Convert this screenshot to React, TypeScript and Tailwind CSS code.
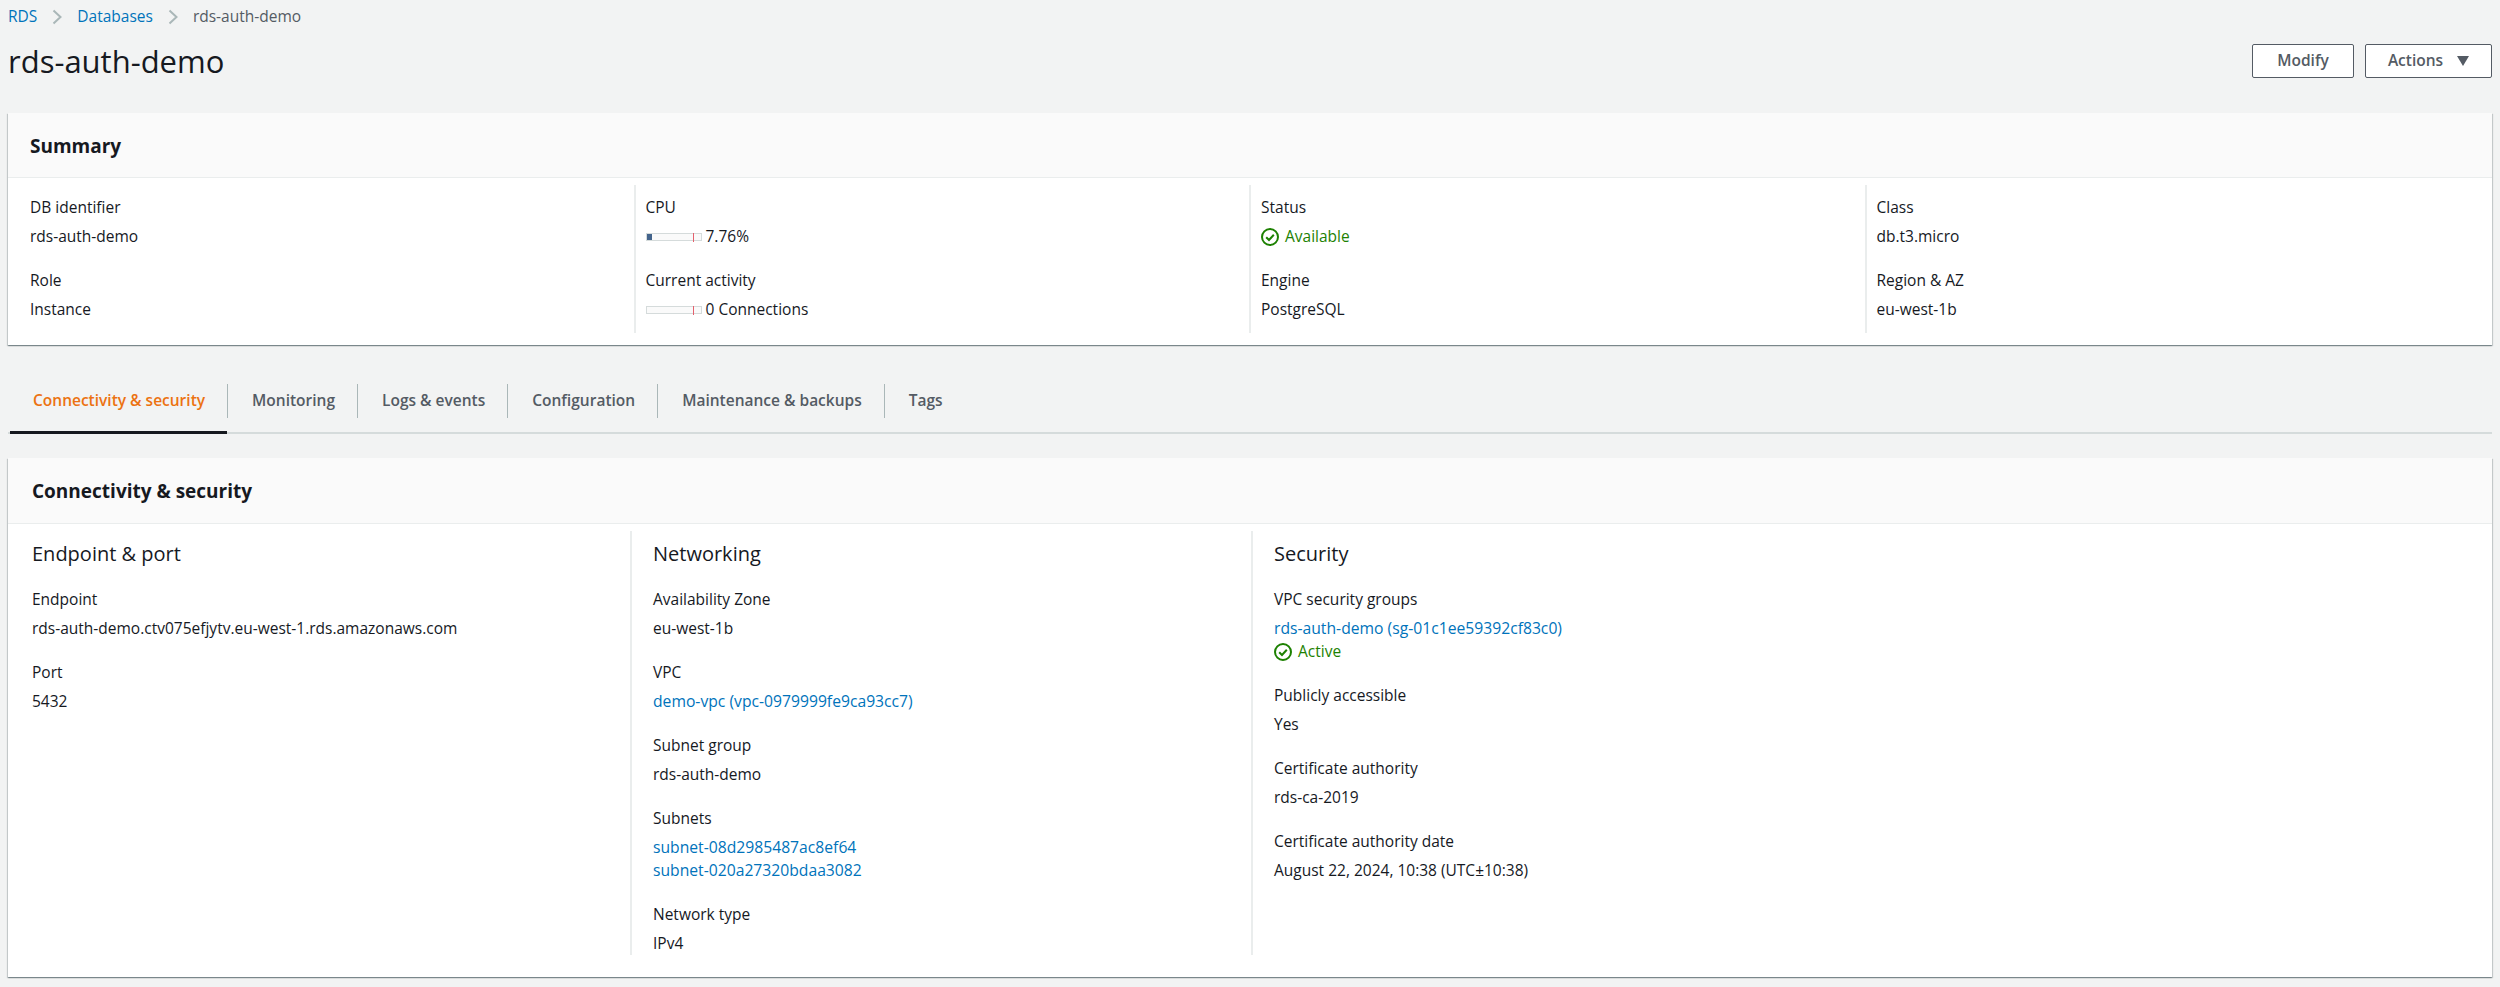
import React from "react";

const font = "font-['Open_Sans','Noto_Sans',sans-serif]";

function Ok({ text }: { text: string }) {
  return (
    <div className="flex items-center gap-[6px] text-[#1d8102] text-[15.5px] leading-[23px]">
      <svg width="18" height="18" viewBox="0 0 18 18" fill="none" stroke="#1d8102" strokeWidth="2">
        <circle cx="9" cy="9" r="8" />
        <path d="M5.2 9.2l2.8 2.8 4.8-5.2" />
      </svg>
      {text}
    </div>
  );
}

function Meter({ fill, text }: { fill: boolean; text: string }) {
  return (
    <div className="flex items-center gap-[4px] text-[15.5px] leading-[23px] text-[#16191f]">
      <div className="relative w-[56px] h-[8px] bg-[#fafafa] border border-[#d5dbdb]">
        {fill && <div className="absolute left-0 top-0 w-[5px] h-[6px] bg-[#44648c]" />}
        <div className="absolute left-[46px] top-[-1px] w-px h-[9px] bg-[#e4606d]" />
      </div>
      {text}
    </div>
  );
}

function Field({ label, children, className = "" }: { label: string; children: React.ReactNode; className?: string }) {
  return (
    <div className={className}>
      <div className="text-[15.5px] leading-[23px] text-[#16191f]">{label}</div>
      <div className="mt-[6px] text-[15.5px] leading-[23px] text-[#16191f]">{children}</div>
    </div>
  );
}

const Link = ({ children }: { children: React.ReactNode }) => (
  <div className="text-[#0073bb] text-[15.7px]">{children}</div>
);

const Chevron = () => (
  <svg className="mx-[15px]" width="10" height="16" viewBox="0 0 10 16" fill="none" stroke="#aab7b8" strokeWidth="2">
    <path d="M1.5 1.5L8.5 8l-7 6.5" />
  </svg>
);

const summary = [
  [
    ["DB identifier", "rds-auth-demo"],
    ["Role", "Instance"],
  ],
  [
    ["CPU", <Meter fill text="7.76%" />],
    ["Current activity", <Meter fill={false} text="0 Connections" />],
  ],
  [
    ["Status", <Ok text="Available" />],
    ["Engine", "PostgreSQL"],
  ],
  [
    ["Class", "db.t3.micro"],
    ["Region & AZ", "eu-west-1b"],
  ],
] as [string, React.ReactNode][][];

const tabs = ["Monitoring", "Logs & events", "Configuration", "Maintenance & backups", "Tags"];

export default function App() {
  return (
    <div className={`${font} bg-[#f2f3f3] h-[987px] overflow-hidden`}>
      {/* Breadcrumb */}
      <div className="flex items-center h-[32px] pl-[8px] pt-[2px] text-[15.5px] text-[#545b64]">
        <span className="text-[#0073bb]">RDS</span>
        <Chevron />
        <span className="text-[#0073bb]">Databases</span>
        <Chevron />
        <span>rds-auth-demo</span>
      </div>

      {/* Title */}
      <div className="flex items-center justify-between h-[57px] px-[8px] mb-[24px]">
        <h1 className="text-[31px] leading-[40px] text-[#16191f]">rds-auth-demo</h1>
        <div className="flex gap-[11px]">
          <button className="w-[102px] h-[34px] bg-white border-[1.5px] border-[#545b64] rounded-[2px] text-[15.5px] font-semibold text-[#545b64]">
            Modify
          </button>
          <button className="w-[127px] h-[34px] bg-white border-[1.5px] border-[#545b64] rounded-[2px] text-[15.5px] font-semibold text-[#545b64] flex items-center justify-center gap-[14px]">
            Actions
            <svg width="12" height="10" viewBox="0 0 12 10" fill="#545b64"><path d="M0 0h12L6 10z" /></svg>
          </button>
        </div>
      </div>

      {/* Summary */}
      <section className="mx-[8px] bg-white shadow-[0_1px_1px_0_rgba(0,28,36,0.3),1px_1px_1px_0_rgba(0,28,36,0.15),-1px_1px_1px_0_rgba(0,28,36,0.15)]">
        <div className="h-[65px] flex items-center px-[22px] pt-[2px] bg-[#fafafa] border-b border-[#eaeded] text-[19px] font-bold text-[#16191f]">
          Summary
        </div>
        <div className="grid grid-cols-4 pl-[22px] pt-[7px] pb-[12px]">
          {summary.map((col, i) => (
            <div key={i} className={`pt-[11px] pb-[12px] ${i > 0 ? "ml-[-12px] pl-[10px] border-l-2 border-[#eaeded]" : ""}`}>
              {col.map(([label, value], j) => (
                <Field key={j} label={label} className={j > 0 ? "mt-[21px]" : ""}>{value}</Field>
              ))}
            </div>
          ))}
        </div>
      </section>

      {/* Tabs */}
      <div className="mx-[8px] mt-[39px] h-[50px] flex items-start border-b-2 border-[#d5dbdb] text-[15.5px] font-semibold text-[#545b64]">
        <div className="ml-[2px] h-[50px] pl-[23px] pr-[22px] border-b-[3px] border-[#16191f] text-[#ec7211]">
          <div className="h-[34px] flex items-center">Connectivity &amp; security</div>
        </div>
        {tabs.map((t) => (
          <div key={t} className="h-[34px] pl-[24px] pr-[22px] flex items-center border-l border-[#aab7b8]">{t}</div>
        ))}
      </div>

      {/* Connectivity */}
      <section className="mx-[8px] mt-[24px] h-[519px] bg-white shadow-[0_1px_1px_0_rgba(0,28,36,0.3),1px_1px_1px_0_rgba(0,28,36,0.15),-1px_1px_1px_0_rgba(0,28,36,0.15)]">
        <div className="h-[66px] flex items-center px-[24px] pt-[2px] bg-[#fafafa] border-b border-[#eaeded] text-[19px] font-bold text-[#16191f]">
          Connectivity &amp; security
        </div>
        <div className="grid grid-cols-[622px_621px_1fr] pt-[7px]">
          <div className="pl-[24px] pt-[11px] h-[423px]">
            <h3 className="text-[20px] leading-[24px] text-[#16191f] mb-[22px]">Endpoint &amp; port</h3>
            <Field label="Endpoint">rds-auth-demo.ctv075efjytv.eu-west-1.rds.amazonaws.com</Field>
            <Field label="Port" className="mt-[21px]">5432</Field>
          </div>
          <div className="pl-[21px] pt-[11px] border-l-2 border-[#eaeded]">
            <h3 className="text-[20px] leading-[24px] text-[#16191f] mb-[22px]">Networking</h3>
            <Field label="Availability Zone">eu-west-1b</Field>
            <Field label="VPC" className="mt-[21px]"><Link>demo-vpc (vpc-0979999fe9ca93cc7)</Link></Field>
            <Field label="Subnet group" className="mt-[21px]">rds-auth-demo</Field>
            <Field label="Subnets" className="mt-[21px]">
              <Link>subnet-08d2985487ac8ef64</Link>
              <Link>subnet-020a27320bdaa3082</Link>
            </Field>
            <Field label="Network type" className="mt-[21px]">IPv4</Field>
          </div>
          <div className="pl-[21px] pt-[11px] border-l-2 border-[#eaeded]">
            <h3 className="text-[20px] leading-[24px] text-[#16191f] mb-[22px]">Security</h3>
            <Field label="VPC security groups">
              <Link>rds-auth-demo (sg-01c1ee59392cf83c0)</Link>
              <Ok text="Active" />
            </Field>
            <Field label="Publicly accessible" className="mt-[21px]">Yes</Field>
            <Field label="Certificate authority" className="mt-[21px]">rds-ca-2019</Field>
            <Field label="Certificate authority date" className="mt-[21px]">August 22, 2024, 10:38 (UTC±10:38)</Field>
          </div>
        </div>
      </section>
    </div>
  );
}
